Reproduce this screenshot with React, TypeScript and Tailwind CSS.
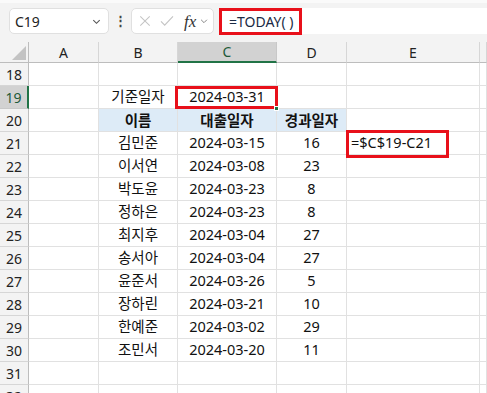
import React from 'react';

const COLS = ['A', 'B', 'C', 'D', 'E', ''];

const people: [string, string, string][] = [
  ['김민준', '2024-03-15', '16'],
  ['이서연', '2024-03-08', '23'],
  ['박도윤', '2024-03-23', '8'],
  ['정하은', '2024-03-23', '8'],
  ['최지후', '2024-03-04', '27'],
  ['송서아', '2024-03-04', '27'],
  ['윤준서', '2024-03-26', '5'],
  ['장하린', '2024-03-21', '10'],
  ['한예준', '2024-03-02', '29'],
  ['조민서', '2024-03-20', '11'],
];

type Row = { num: number; cells: (string | null)[]; header?: boolean };

const rows: Row[] = [
  { num: 18, cells: [null, null, null, null, null, null] },
  { num: 19, cells: [null, '기준일자', '2024-03-31', null, null, null] },
  { num: 20, cells: [null, '이름', '대출일자', '경과일자', null, null], header: true },
  ...people.map((p, i) => ({
    num: 21 + i,
    cells: [null, p[0], p[1], p[2], i === 0 ? '=$C$19-C21' : null, null],
  })),
  { num: 31, cells: [null, null, null, null, null, null] },
  { num: 32, cells: [null, null, null, null, null, null] },
];

const Chevron = ({ className }: { className?: string }) => (
  <svg className={className} viewBox="0 0 12 12" fill="none" stroke="currentColor" strokeWidth="1.2">
    <path d="M2.5 4.5 6 8l3.5-3.5" />
  </svg>
);

const App: React.FC = () => {
  return (
    <div
      className="w-[487px] h-[393px] overflow-hidden bg-white text-[#111]"
      style={{ fontFamily: '"Noto Sans", "Noto Sans CJK KR", sans-serif' }}
    >
      {/* formula bar */}
      <div className="h-[42px] bg-[#f3f3f3] border-t-[3px] border-[#fafafa] flex items-start pt-[5px] pl-[9px]">
        <div className="w-[100px] h-[26px] bg-white border border-[#e0e0e0] rounded-[5px] flex items-center pl-[5px] pr-[6px]">
          <span className="text-[14px] text-[#222]">C19</span>
          <Chevron className="w-[11px] h-[11px] ml-auto text-[#555]" />
        </div>
        <div className="w-[22px] h-[26px] flex items-center justify-center text-[#444] text-[13px] font-bold">⋮</div>
        <div className="w-[83px] h-[26px] bg-white border border-[#e0e0e0] rounded-[5px] flex items-center pl-[7px]">
          <svg className="w-[12px] h-[12px] text-[#c4c4c4]" viewBox="0 0 14 14" fill="none" stroke="currentColor" strokeWidth="1.2">
            <path d="M1.5 1.5 12.5 12.5M12.5 1.5 1.5 12.5" />
          </svg>
          <svg className="w-[14px] h-[12px] ml-[9px] text-[#c4c4c4]" viewBox="0 0 15 13" fill="none" stroke="currentColor" strokeWidth="1.2">
            <path d="M1 7 5 11 14 1.5" />
          </svg>
          <span
            className="text-[17px] italic text-[#333] ml-[10px] leading-none"
            style={{ fontFamily: '"Liberation Serif", serif' }}
          >
            fx
          </span>
          <Chevron className="w-[10px] h-[10px] text-[#888] ml-[3px]" />
        </div>
        <div className="flex-1 h-[26px] bg-white ml-[5px] flex items-center">
          <div className="h-[27px] w-[83px] border-[3px] border-[#e8101a] flex items-center pl-[7px] text-[14px] text-[#1a2a44]">
            =TODAY( )
          </div>
        </div>
      </div>

      {/* sheet */}
      <div className="grid grid-cols-[29px_70px_79px_99px_70px_133px_1fr] text-[14.5px]">
        {/* column headers */}
        <div className="h-[21px] bg-[#f3f3f3] border-r border-b border-[#bdbdbd] flex items-end justify-end p-[2px]">
          <svg className="w-[14px] h-[14px]" viewBox="0 0 14 14">
            <path d="M14 0 14 14 0 14Z" fill="#c3c3c3" />
          </svg>
        </div>
        {COLS.map((c, i) => (
          <div
            key={i}
            className={
              c === 'C'
                ? 'h-[21px] bg-[#d2d2d2] border-r border-[#c8c8c8] border-b-2 border-b-[#217346] flex items-center justify-center text-[14px] text-[#1d5a38]'
                : 'h-[21px] bg-[#f3f3f3] border-r border-b border-[#d6d6d6] border-b-[#bdbdbd] flex items-center justify-center text-[14px] text-[#222]'
            }
          >
            {c}
          </div>
        ))}

        {rows.map((r) => (
          <React.Fragment key={r.num}>
            <div
              className={
                r.num === 19
                  ? 'h-[23px] bg-[#d2d2d2] border-r-2 border-r-[#217346] border-b border-b-[#c8c8c8] flex items-center justify-center text-[14px] text-[#1d5a38]'
                  : 'h-[23px] bg-[#f3f3f3] border-r border-b border-[#d6d6d6] border-r-[#bdbdbd] flex items-center justify-center text-[14px] text-[#222]'
              }
            >
              {r.num}
            </div>
            {r.cells.map((v, ci) => {
              const blue = r.header && ci >= 1 && ci <= 3;
              const isFormula = r.num === 21 && ci === 4;
              const isBase = r.num === 19 && ci === 2;
              return (
                <div
                  key={ci}
                  className={`relative h-[23px] border-r border-b border-[#e1e1e1] flex items-center ${
                    isFormula ? 'justify-start pl-[4px]' : 'justify-center'
                  } ${blue ? 'bg-[#ddebf7] font-bold' : ''}`}
                  style={{ fontFamily: blue ? '"Noto Sans CJK KR", sans-serif' : undefined }}
                >
                  {v}
                  {isBase && (
                    <>
                      <div className="absolute -left-[3px] -right-[2px] top-0 -bottom-[1px] border-[3px] border-[#e8101a] z-10" />
                      <div className="absolute -right-[3px] -bottom-[3px] w-[5px] h-[5px] bg-[#217346] border border-white z-20" />
                    </>
                  )}
                  {isFormula && (
                    <div className="absolute -left-[1px] -top-[2px] w-[103px] h-[28px] border-[3px] border-[#e8101a] z-10" />
                  )}
                </div>
              );
            })}
          </React.Fragment>
        ))}
      </div>
    </div>
  );
};

export default App;
